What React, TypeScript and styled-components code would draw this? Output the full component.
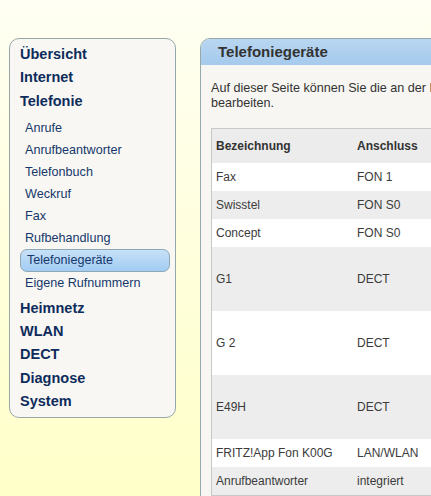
import React from "react";
import styled, { createGlobalStyle, css } from "styled-components";

const GlobalStyle = createGlobalStyle`
  html, body {
    margin: 0;
    padding: 0;
    height: 100%;
    overflow: hidden;
  }
  body {
    background: linear-gradient(to bottom, #fffff3 0%, #ffffd9 60%, #ffffc9 100%);
    font-family: "Liberation Sans", Arial, sans-serif;
  }
`;

type Entry = { label: string; active?: boolean };
type Section = { label: string; children?: Entry[] };

const menu: Section[] = [
  { label: "Übersicht" },
  { label: "Internet" },
  {
    label: "Telefonie",
    children: [
      { label: "Anrufe" },
      { label: "Anrufbeantworter" },
      { label: "Telefonbuch" },
      { label: "Weckruf" },
      { label: "Fax" },
      { label: "Rufbehandlung" },
      { label: "Telefoniegeräte", active: true },
      { label: "Eigene Rufnummern" },
    ],
  },
  { label: "Heimnetz" },
  { label: "WLAN" },
  { label: "DECT" },
  { label: "Diagnose" },
  { label: "System" },
];

type Device = { name: string; port: string; tall?: boolean };

const devices: Device[] = [
  { name: "Fax", port: "FON 1" },
  { name: "Swisstel", port: "FON S0" },
  { name: "Concept", port: "FON S0" },
  { name: "G1", port: "DECT", tall: true },
  { name: "G 2", port: "DECT", tall: true },
  { name: "E49H", port: "DECT", tall: true },
  { name: "FRITZ!App Fon K00G", port: "LAN/WLAN" },
  { name: "Anrufbeantworter", port: "integriert" },
];

const Page = styled.div`
  display: flex;
  align-items: flex-start;
  gap: 24px;
  padding: 38px 0 0 9px;
`;

const Nav = styled.nav`
  flex: 0 0 auto;
  width: 167px;
  box-sizing: border-box;
  padding: 4px 5px 4px 10px;
  background: #f8f7f3;
  border: 1px solid #95a8a8;
  border-radius: 10px;
`;

const TopItem = styled.a`
  display: block;
  height: 23.3px;
  line-height: 23.3px;
  font-size: 14.5px;
  font-weight: bold;
  color: #0d2c5c;
  text-decoration: none;
  white-space: nowrap;
`;

const SubList = styled.div`
  margin: 4px 0 3px;
`;

const SubItem = styled.a<{ $active?: boolean }>`
  display: block;
  box-sizing: border-box;
  height: 22.1px;
  line-height: 20px;
  padding-left: 4px;
  border: 1px solid transparent;
  border-radius: 7px;
  font-size: 12.6px;
  color: #15376c;
  text-decoration: none;
  white-space: nowrap;

  ${(p) =>
    p.$active &&
    css`
      padding-left: 6px;
      border-color: #8ea7b4;
      background: linear-gradient(to bottom, #c7e1f7 0%, #b4d6f5 50%, #a2ccf3 100%);
    `}
`;

const Panel = styled.section`
  flex: 0 0 auto;
  width: 640px;
  background: #f7f6f2;
  border: 1px solid #97a9a9;
  border-radius: 10px 10px 0 0;
`;

const PanelHeader = styled.h1`
  margin: 0;
  height: 26px;
  line-height: 26px;
  padding-left: 17px;
  font-size: 15px;
  font-weight: bold;
  color: #333333;
  background: linear-gradient(to bottom, #b8d6f1 0%, #a5caed 100%);
  border-radius: 9px 9px 0 0;
`;

const PanelBody = styled.div`
  padding: 16px 10px 0;
`;

const Intro = styled.p`
  margin: 0;
  font-size: 12.6px;
  line-height: 15px;
  color: #333333;
`;

const DeviceTable = styled.table`
  width: 100%;
  margin-top: 17px;
  table-layout: fixed;
  border-collapse: separate;
  border-spacing: 0;
  background: #ffffff;
  border: 1px solid #c8c8c8;
  font-size: 12px;
`;

const HeadCell = styled.th`
  height: 34px;
  padding: 0 4px;
  text-align: left;
  font-weight: bold;
  color: #333333;
  background: #ececec;
  white-space: nowrap;
`;

const Row = styled.tr<{ $shaded: boolean }>`
  background: ${(p) => (p.$shaded ? "#ededed" : "#ffffff")};
`;

const Cell = styled.td<{ $tall?: boolean }>`
  height: ${(p) => (p.$tall ? 64 : 28)}px;
  padding: 0 4px;
  color: #3b3b3b;
  white-space: nowrap;
  vertical-align: middle;
`;

export default function App() {
  return (
    <>
      <GlobalStyle />
      <Page>
        <Nav>
          {menu.map((section) => (
            <React.Fragment key={section.label}>
              <TopItem href="#">{section.label}</TopItem>
              {section.children && (
                <SubList>
                  {section.children.map((entry) => (
                    <SubItem key={entry.label} href="#" $active={entry.active}>
                      {entry.label}
                    </SubItem>
                  ))}
                </SubList>
              )}
            </React.Fragment>
          ))}
        </Nav>

        <Panel>
          <PanelHeader>Telefoniegeräte</PanelHeader>
          <PanelBody>
            <Intro>
              Auf dieser Seite können Sie die an der FRITZ!Box angeschlossenen
              Telefoniegeräte einrichten und
              <br />
              bearbeiten.
            </Intro>
            <DeviceTable>
              <colgroup>
                <col style={{ width: 141 }} />
                <col />
              </colgroup>
              <thead>
                <tr>
                  <HeadCell>Bezeichnung</HeadCell>
                  <HeadCell>Anschluss</HeadCell>
                </tr>
              </thead>
              <tbody>
                {devices.map((d, i) => (
                  <Row key={d.name} $shaded={i % 2 === 1}>
                    <Cell $tall={d.tall}>{d.name}</Cell>
                    <Cell $tall={d.tall}>{d.port}</Cell>
                  </Row>
                ))}
              </tbody>
            </DeviceTable>
          </PanelBody>
        </Panel>
      </Page>
    </>
  );
}
